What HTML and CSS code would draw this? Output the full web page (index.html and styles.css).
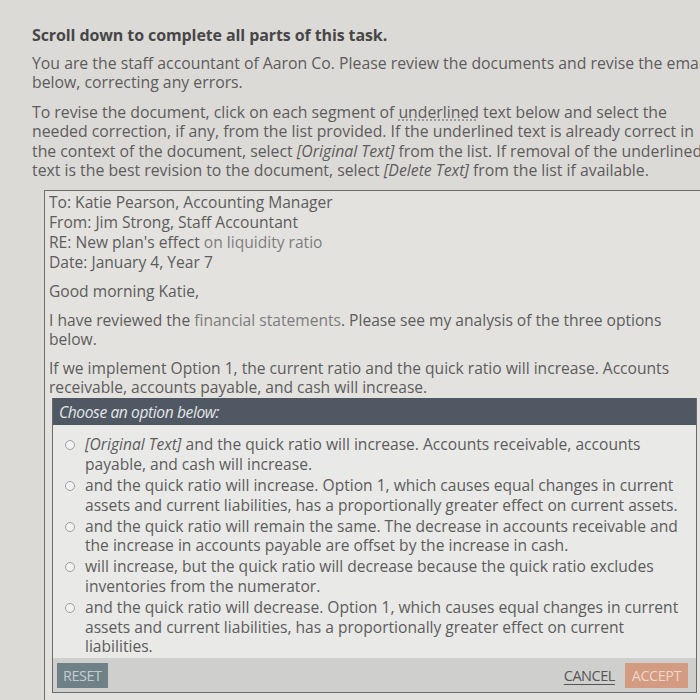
FILE: index.html
```html
<!DOCTYPE html>
<html lang="en">
<head>
<meta charset="utf-8">
<title>Task</title>
<link rel="stylesheet" href="styles.css">
</head>
<body>
<div class="page">
  <h1 class="title">Scroll down to complete all parts of this task.</h1>
  <p class="intro">You are the staff accountant of Aaron Co. Please review the documents and revise the email below, correcting any errors.</p>
  <p class="intro">To revise the document, click on each segment of <span class="dotted">underlined</span> text below and select the needed correction, if any, from the list provided. If the underlined text is already correct in the context of the document, select <em>[Original Text]</em> from the list. If removal of the underlined text is the best revision to the document, select <em>[Delete Text]</em> from the list if available.</p>

  <div class="doc">
    <div class="head-lines">
      <div>To: Katie Pearson, Accounting Manager</div>
      <div>From: Jim Strong, Staff Accountant</div>
      <div>RE: New plan's effect <span class="glare">on liquidity ratio</span></div>
      <div>Date: January 4, Year 7</div>
    </div>
    <p class="doc-p">Good morning Katie,</p>
    <p class="doc-p">I have reviewed the <span class="glare">financial statements</span>. Please see my analysis of the three options below.</p>
    <p class="doc-p">If we implement Option 1, the current ratio and the quick ratio will increase. Accounts receivable, accounts payable, and cash will increase.</p>

    <div class="panel">
      <div class="panel-head">Choose an option below:</div>
      <ul class="options">
        <li class="option"><span class="radio"></span><span class="opt-text"><em>[Original Text]</em> and the quick ratio will increase. Accounts receivable, accounts payable, and cash will increase.</span></li>
        <li class="option"><span class="radio"></span><span class="opt-text">and the quick ratio will increase. Option 1, which causes equal changes in current assets and current liabilities, has a proportionally greater effect on current assets.</span></li>
        <li class="option"><span class="radio"></span><span class="opt-text">and the quick ratio will remain the same. The decrease in accounts receivable and the increase in accounts payable are offset by the increase in cash.</span></li>
        <li class="option"><span class="radio"></span><span class="opt-text">will increase, but the quick ratio will decrease because the quick ratio excludes inventories from the numerator.</span></li>
        <li class="option"><span class="radio"></span><span class="opt-text">and the quick ratio will decrease. Option 1, which causes equal changes in current assets and current liabilities, has a proportionally greater effect on current liabilities.</span></li>
      </ul>
      <div class="panel-foot">
        <button class="btn btn-reset" type="button">RESET</button>
        <div class="foot-right">
          <button class="btn btn-cancel" type="button">CANCEL</button>
          <button class="btn btn-accept" type="button">ACCEPT</button>
        </div>
      </div>
    </div>
  </div>
</div>
</body>
</html>
```

FILE: styles.css
```css
html, body {
  margin: 0;
  padding: 0;
  overflow: hidden;
  height: 700px;
}
body {
  background: #dcdad7;
  font-family: "Open Sans", "Noto Sans", "DejaVu Sans", sans-serif;
  font-size: 15.6px;
  color: #5c5c5c;
}
.page {
  width: 680px;
  margin-left: 32px;
  padding-top: 25px;
}
.title {
  margin: 0 0 9px 0;
  font-size: 16px;
  font-weight: 700;
  line-height: 20px;
  color: #474747;
  letter-spacing: -0.1px;
}
.intro {
  margin: 0 0 10px 0;
  font-size: 15.8px;
  line-height: 19.4px;
}
.intro em {
  font-style: italic;
}
.dotted {
  text-decoration: underline dotted #8a8a8a;
  text-underline-offset: 2px;
}
.doc {
  margin-left: 12px;
  width: 660px;
  border: 1px solid #6d6d6d;
  border-bottom: none;
  background: #e3e2df;
  padding: 2px 0 0 4px;
  height: 520px;
  box-sizing: border-box;
}
.head-lines {
  line-height: 19.7px;
}
.doc-p {
  margin: 10px 0 0 0;
  line-height: 19px;
}
.glare {
  color: #7d7d7d;
}
.panel {
  margin: 1px 0 0 3px;
  width: 643px;
  border: 1px solid #6a6a6a;
  border-top: none;
  background: #e9e9e7;
}
.panel-head {
  background: #4f5863;
  color: #e4e6e8;
  font-style: italic;
  height: 27px;
  line-height: 28px;
  padding-left: 6px;
  letter-spacing: -0.4px;
}
.options {
  list-style: none;
  margin: 0;
  padding: 10px 10px 0 12px;
}
.option {
  display: flex;
  align-items: flex-start;
  gap: 10px;
  margin-bottom: 1.3px;
  line-height: 19.7px;
}
.radio {
  flex: none;
  width: 8px;
  height: 8px;
  margin-top: 5px;
  border: 1.3px solid #a0a0a0;
  border-radius: 50%;
  background: #f2f2f2;
}
.opt-text em {
  font-style: italic;
}
.panel-foot {
  display: flex;
  justify-content: space-between;
  align-items: flex-end;
  background: #cfd0ce;
  height: 34px;
  padding: 0 8px 4px 4px;
  box-sizing: border-box;
}
.foot-right {
  display: flex;
  align-items: flex-end;
  gap: 10px;
}
.btn {
  font-family: "Open Sans", "Noto Sans", sans-serif;
  font-size: 14.5px;
  border: none;
  margin: 0;
  cursor: pointer;
  letter-spacing: -0.5px;
}
.btn-reset {
  background: #6f8187;
  color: #c3cdd0;
  height: 25px;
  padding: 0 6px;
}
.btn-cancel {
  background: transparent;
  color: #555;
  text-decoration: underline;
  text-underline-offset: 3px;
  height: 25px;
  padding: 0;
}
.btn-accept {
  background: #d39b82;
  color: #f1d5c8;
  height: 25px;
  padding: 0 7px;
}
```
